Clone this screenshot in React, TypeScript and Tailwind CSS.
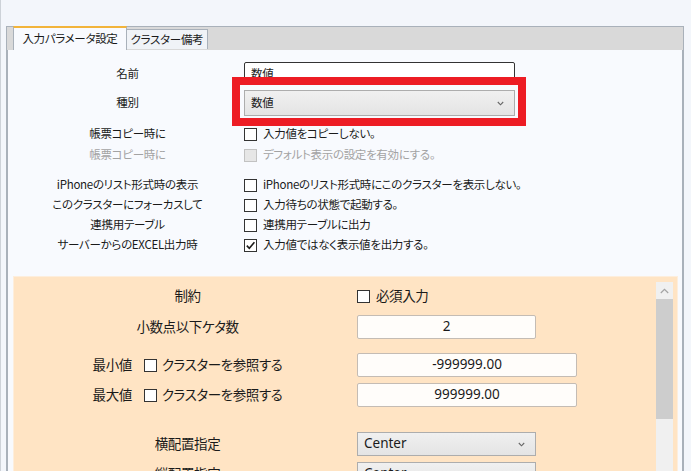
import type { ReactNode } from 'react'

const FONT = "font-['Noto_Sans_CJK_JP','Noto_Sans',sans-serif] [font-feature-settings:'palt']"
const LATIN = "font-['Noto_Sans','Noto_Sans_CJK_JP',sans-serif] tracking-normal"

function Check({ checked, disabled }: { checked?: boolean; disabled?: boolean }) {
  return (
    <span
      className={`w-[13px] h-[13px] shrink-0 flex items-center justify-center border ${
        disabled ? 'border-[#c2c2c2] bg-[#e6e6e6]' : 'border-[#333] bg-white'
      }`}
    >
      {checked && (
        <svg width="11" height="11" viewBox="0 0 11 11" fill="none">
          <path d="M1.8 5.6 L4.3 8.2 L9.4 2.2" stroke="#1a1a1a" strokeWidth="1.6" />
        </svg>
      )}
    </span>
  )
}

function Chevron({ up }: { up?: boolean }) {
  if (up) {
    return (
      <svg width="9" height="6" viewBox="0 0 9 6" fill="none">
        <path d="M0.8 5 L4.5 1.3 L8.2 5" stroke="#a3a3a3" strokeWidth="1.2" />
      </svg>
    )
  }
  return (
    <svg width="7" height="5" viewBox="0 0 7 5" fill="none">
      <path d="M0.8 1 L3.5 3.8 L6.2 1" stroke="#666" strokeWidth="1.1" />
    </svg>
  )
}

function TopRow({ label, muted, className = '', children }: { label: string; muted?: boolean; className?: string; children: ReactNode }) {
  return (
    <div className={`flex items-center ${className}`}>
      <div className={`w-[236px] pl-[3px] text-center ${muted ? 'text-[#a3a3a3]' : ''}`}>{label}</div>
      {children}
    </div>
  )
}

function CheckText({ text, checked, disabled }: { text: string; checked?: boolean; disabled?: boolean }) {
  return (
    <div className="flex items-center gap-[6px]">
      <Check checked={checked} disabled={disabled} />
      <span className={disabled ? 'text-[#a3a3a3]' : ''}>{text}</span>
    </div>
  )
}

function ORow({ label, className = '', children }: { label: ReactNode; className?: string; children: ReactNode }) {
  return (
    <div className={`flex items-center ${className}`}>
      <div className="w-[343px] pl-[4px] flex justify-center">{label}</div>
      {children}
    </div>
  )
}

function NumBox({ value, w }: { value: string; w: string }) {
  return (
    <div className={`${w} ${LATIN} h-[24px] flex items-center justify-center bg-[#fffdfa] border border-[#c4bcb4] rounded-[2px]`}>
      {value}
    </div>
  )
}

function Drop({ value }: { value: string }) {
  return (
    <div className={`${LATIN} w-[179px] h-[24px] flex items-center justify-between pl-[6px] pr-[10px] border border-[#adadad] bg-gradient-to-b from-[#f0f0f0] to-[#e4e4e4]`}>
      <span>{value}</span>
      <Chevron />
    </div>
  )
}

export default function App() {
  return (
    <div className={`${FONT} w-[691px] h-[471px] overflow-hidden bg-[#f3f6fb] border-l border-[#cdd2d8] pt-[26px] pl-[5px] pr-[7px] text-[11.5px] tracking-[-0.3px] text-[#1a1a1a] leading-none`}>
      {/* tab header */}
      <div className="relative z-10 h-[24px] -mb-px flex items-end bg-[#d9d9d9] border-t border-l border-r border-[#a9b1ba] pl-[6px]">
        <div className="w-[114px] h-[24px] flex items-center justify-center bg-[#f8fafe] border-t-2 border-t-[#f2b43a] border-x border-x-[#a9b1ba]">
          入力パラメータ設定
        </div>
        <div className="w-[81px] h-[20px] mb-px flex items-center justify-center bg-[#f0f3f7] border-t border-r border-[#a9b1ba]">
          クラスター備考
        </div>
      </div>

      {/* content */}
      <div className="h-[500px] bg-[#f8fafe] border border-[#a9b1ba] border-x-2 border-l-[#a9b1ba] pt-[12px]">
        <TopRow label="名前">
          <div className="w-[271px] h-[23px] flex items-center px-[6px] bg-white border border-[#333] rounded-[2px]">数値</div>
        </TopRow>

        <TopRow label="種別" className="mt-[5px]">
          <div className="relative">
            <div className="w-[271px] h-[26px] flex items-center justify-between pl-[6px] pr-[10px] border border-[#adadad] bg-gradient-to-b from-[#f0f0f0] to-[#e4e4e4]">
              <span>数値</span>
              <Chevron />
            </div>
            <div className="absolute -left-[12px] -right-[11px] -top-[13px] -bottom-[10px] border-[8px] border-[#ed1c24]" />
          </div>
        </TopRow>

        <TopRow label="帳票コピー時に" className="h-[20px] mt-[8px]">
          <CheckText text="入力値をコピーしない。" />
        </TopRow>
        <TopRow label="帳票コピー時に" muted className="h-[20px] mt-px">
          <CheckText text="デフォルト表示の設定を有効にする。" disabled />
        </TopRow>

        <TopRow label="iPhoneのリスト形式時の表示" className="h-[20px] mt-[10px]">
          <CheckText text="iPhoneのリスト形式時にこのクラスターを表示しない。" />
        </TopRow>
        <TopRow label="このクラスターにフォーカスして" className="h-[20px]">
          <CheckText text="入力待ちの状態で起動する。" />
        </TopRow>
        <TopRow label="連携用テーブル" className="h-[20px]">
          <CheckText text="連携用テーブルに出力" />
        </TopRow>
        <TopRow label="サーバーからのEXCEL出力時" className="h-[20px]">
          <CheckText text="入力値ではなく表示値を出力する。" checked />
        </TopRow>

        {/* constraint panel */}
        <div className="mt-[21px] ml-[5px] mr-[4px] h-[260px] flex bg-[#ffe4c4] border-t border-x border-[#fdeedd] text-[13.5px] tracking-[-0.4px]">
          <div className="flex-1 pt-[9px]">
            <ORow label="制約" className="h-[20px]">
              <div className="flex items-center gap-[6px]">
                <Check />
                <span>必須入力</span>
              </div>
            </ORow>
            <ORow label="小数点以下ケタ数" className="mt-[9px]">
              <NumBox value="2" w="w-[179px]" />
            </ORow>
            <ORow
              label={
                <div className="flex items-center">
                  <span>最小値</span>
                  <span className="ml-[12px] mr-[5px]"><Check /></span>
                  <span>クラスターを参照する</span>
                </div>
              }
              className="mt-[14px]"
            >
              <NumBox value="-999999.00" w="w-[220px]" />
            </ORow>
            <ORow
              label={
                <div className="flex items-center">
                  <span>最大値</span>
                  <span className="ml-[12px] mr-[5px]"><Check /></span>
                  <span>クラスターを参照する</span>
                </div>
              }
              className="mt-[6px]"
            >
              <NumBox value="999999.00" w="w-[220px]" />
            </ORow>
            <ORow label="横配置指定" className="mt-[25px]">
              <Drop value="Center" />
            </ORow>
            <ORow label="縦配置指定" className="mt-[6px]">
              <Drop value="Center" />
            </ORow>
          </div>

          {/* scrollbar */}
          <div className="w-[17px] mt-[5px] mr-[4px] flex flex-col bg-[#f0f0f0]">
            <div className="h-[17px] flex items-center justify-center">
              <Chevron up />
            </div>
            <div className="h-[120px] bg-[#cdcdcd]" />
          </div>
        </div>
      </div>
    </div>
  )
}
